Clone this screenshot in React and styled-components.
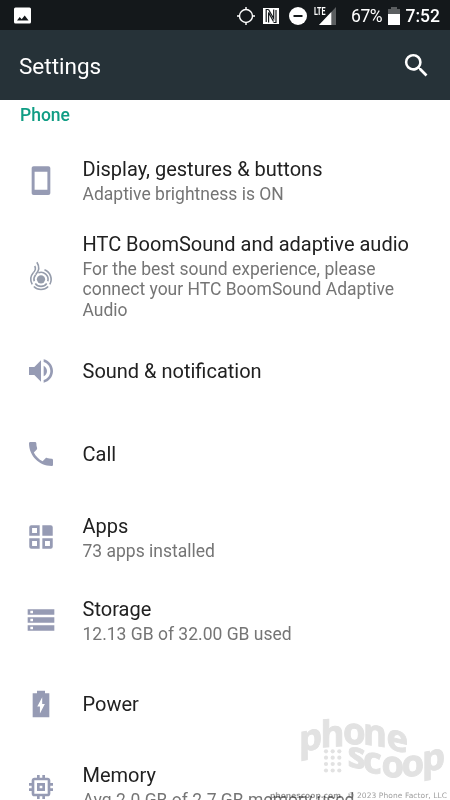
import React from "react";
import styled, { createGlobalStyle } from "styled-components";

const GlobalStyle = createGlobalStyle`
  * {
    box-sizing: border-box;
  }

  body {
    margin: 0;
    background-color: white;
    font-family: Roboto, "Liberation Sans", sans-serif;
  }
`;

const Screen = styled.div`
  position: relative;
  display: flex;
  flex-direction: column;
  width: 450px;
  height: 800px;
  overflow: hidden;
  background-color: white;
`;

const StatusBar = styled.div`
  display: flex;
  flex: none;
  align-items: center;
  justify-content: space-between;
  height: 30px;
  padding: 2px 10px 0 13px;
  background-color: #14181b;
  color: white;
`;

const StatusGroup = styled.div`
  display: flex;
  align-items: center;
`;

const StatusIcon = styled.svg`
  display: block;
  margin-right: ${props => props.$gap || 0}px;
`;

const Percent = styled.span`
  width: 36.5px;
  font-size: 17.5px;
  letter-spacing: -0.45px;
`;

const Clock = styled.span`
  font-size: 17.5px;
  font-weight: 500;
`;

const Toolbar = styled.header`
  display: flex;
  flex: none;
  align-items: center;
  justify-content: space-between;
  height: 70px;
  padding: 0 18px 0 19px;
  background-color: #263238;
  color: white;
`;

const Title = styled.h1`
  margin: 1px 0 0;
  font-size: 22.5px;
  font-weight: 400;
`;

const SearchButton = styled.button`
  display: flex;
  padding: 0;
  border: 0;
  background: none;
  color: white;
`;

const Category = styled.h2`
  flex: none;
  height: 39.7px;
  margin: 0;
  padding: 5px 20px 0;
  color: #0f9d84;
  font-size: 17.5px;
  font-weight: 500;
  line-height: 21px;
`;

const Row = styled.div`
  display: flex;
  flex: none;
  align-items: center;
  min-height: 83.1px;
  padding: 9px 32px 9px 25px;
`;

const RowIcon = styled.svg`
  display: block;
  flex: none;
  width: 32px;
  height: 32px;
  margin-right: 25.5px;
  fill: #969bb4;
`;

const RowName = styled.div`
  color: #212121;
  font-size: 20px;
  line-height: 24px;
`;

const RowSummary = styled.div`
  padding-top: 3.1px;
  color: #757575;
  font-size: 17.5px;
  line-height: 20.6px;
`;

const Watermark = styled.svg`
  position: absolute;
  right: 0;
  bottom: 0;
  mix-blend-mode: multiply;
`;

const rows = [
  {
    name: "Display, gestures & buttons",
    summary: "Adaptive brightness is ON",
    icon: (
      <path
        fillRule="evenodd"
        d="M6.500 1h11c.9 0 1.500.7 1.500 1.500v18.500c0 .8-.6 1.500-1.500 1.500h-11C5.600 22.500 5 21.800 5 21V2.500C5 1.700 5.600 1 6.500 1zM7.200 5v13.500h9.600V5z"
      />
    )
  },
  {
    name: "HTC BoomSound and adaptive audio",
    summary:
      "For the best sound experience, please connect your HTC BoomSound Adaptive Audio",
    icon: (
      <g fill="none" stroke="#959cab" strokeWidth="1.200">
        <circle cx="12" cy="14.500" r="3.100" fill="#959cab" stroke="none" />
        <path d="M10 9.600A5.300 5.300 0 0 1 17.100 15.900M16.300 17.600A5.300 5.300 0 0 1 7.700 17.600M6.900 15.900A5.300 5.300 0 0 1 8 11" />
        <path d="M14.600 7.400A7.600 7.600 0 0 1 18.600 18.300M17.400 19.900A7.600 7.600 0 0 1 6.600 19.900M5.400 18.300A7.600 7.600 0 0 1 6.200 9.600" />
        <path d="M6.200 9.600C8 7.800 8.100 6 7.300 4.500M8 11C10.800 8 10.800 4.600 8.900 1.700" />
      </g>
    )
  },
  {
    name: "Sound & notification",
    icon: (
      <path d="M3 9v6h4l5 5V4L7 9H3zm13.500 3c0-1.770-1.020-3.290-2.500-4.030v8.050c1.480-.73 2.500-2.250 2.500-4.020zM14 3.230v2.060c2.890.86 5 3.540 5 6.710s-2.110 5.850-5 6.710v2.060c4.010-.91 7-4.490 7-8.770s-2.990-7.860-7-8.770z" />
    )
  },
  {
    name: "Call",
    icon: (
      <path d="M6.620 10.790c1.440 2.830 3.760 5.140 6.590 6.590l2.200-2.200c.27-.27.67-.36 1.020-.24 1.120.37 2.330.57 3.570.57.55 0 1 .45 1 1V20c0 .55-.45 1-1 1-9.390 0-17-7.610-17-17 0-.55.45-1 1-1h3.500c.55 0 1 .45 1 1 0 1.250.2 2.450.57 3.570.11.35.03.74-.25 1.020l-2.200 2.200z" />
    )
  },
  {
    name: "Apps",
    summary: "73 apps installed",
    icon: (
      <path
        fillRule="evenodd"
        d="M4.700 3.200H11V11H3.200V4.700a1.500 1.500 0 0 1 1.500-1.500zM5.300 5.300v3.700H9V5.300zM13 3.200h6.300a1.500 1.500 0 0 1 1.500 1.500V11H13zM3.200 13H11v7.800H4.700a1.500 1.500 0 0 1-1.500-1.500zM5.300 15v3.700H9V15zM13 13h7.800v6.300a1.500 1.500 0 0 1-1.500 1.500H13zm2 2v3.700h3.700V15z"
      />
    )
  },
  {
    name: "Storage",
    summary: "12.13 GB of 32.00 GB used",
    icon: (
      <path d="M2 20h20v-4H2v4zm2-3h2v2H4v-2zM2 4v4h20V4H2zm4 3H4V5h2v2zm-4 7h20v-4H2v4zm2-3h2v2H4v-2z" />
    )
  },
  {
    name: "Power",
    icon: (
      <path
        fillRule="evenodd"
        d="M5.750 4H9V2h6v2h3.250v18H5.750zM12.900 7L9.200 13.800h2v5.400l3.700-7.200h-2z"
      />
    )
  },
  {
    name: "Memory",
    summary: "Avg 2.0 GB of 2.7 GB memory used",
    icon: (
      <path d="M15 9H9v6h6V9zm-2 4h-2v-2h2v2zm8-2V9h-2V7c0-1.100-.9-2-2-2h-2V3h-2v2h-2V3H9v2H7c-1.100 0-2 .9-2 2v2H3v2h2v2H3v2h2v2c0 1.100.9 2 2 2h2v2h2v-2h2v2h2v-2h2c1.100 0 2-.9 2-2v-2h2v-2h-2v-2h2zm-4 6H7V7h10v10z" />
    )
  }
];

// each letter of the logo sits on its own slanted baseline
const logoLetters = [
  ["p", 299, 752.500, -11],
  ["h", 320.500, 747.500, -4],
  ["o", 343, 743.500, 3],
  ["n", 363, 744, 8],
  ["e", 386.500, 748.500, 13],
  ["s", 347.500, 766, 12],
  ["c", 363, 771.500, 9],
  ["o", 381.500, 776.500, 3],
  ["o", 401.500, 777, -5],
  ["p", 422, 772.500, -11]
];

const dotColumns = [326, 332.700, 339.300];
const dotRows = [751.300, 757.700, 764, 770.500];

function SettingsRow({ icon, name, summary }) {
  return (
    <Row>
      <RowIcon viewBox="0 0 24 24">{icon}</RowIcon>
      <div>
        <RowName>{name}</RowName>
        {summary && <RowSummary>{summary}</RowSummary>}
      </div>
    </Row>
  );
}

function StatusIcons() {
  return (
    <StatusGroup>
      <StatusIcon width="18" height="18" viewBox="0 0 18 18" $gap={8.5}>
        <g fill="none" stroke="white" strokeWidth="1.400">
          <circle cx="9" cy="9" r="6.500" />
          <path d="M9 0v3M9 15V18M0 9h3M15 9H18" />
        </g>
      </StatusIcon>
      <StatusIcon width="16" height="16" viewBox="0 0 16 16" $gap={10}>
        <path fill="white" d="M0 0h16v16H0z" />
        <path
          fill="none"
          stroke="#14181b"
          strokeWidth="1.200"
          d="M5.500 1.500H3.200V14M5.600 14.500V4.500L10.500 13.500M5.500 1.500L10.700 10.500V1.500M10.500 14.500h2.500V2"
        />
      </StatusIcon>
      <StatusIcon width="18" height="18" viewBox="0 0 18 18" $gap={7}>
        <circle cx="9" cy="9" r="9" fill="white" />
        <path fill="#14181b" d="M4.500 8h9v2h-9z" />
      </StatusIcon>
      <StatusIcon width="23" height="18" viewBox="0 0 23 18" $gap={14}>
        <path fill="#5b5e60" d="M22 0v18H5z" />
        <path fill="white" d="M17.300 5v13H5z" />
        <path fill="#14181b" d="M0 0h12.500v9.500H0z" />
        <text
          x="0"
          y="8.300"
          fill="white"
          fontSize="11"
          fontWeight="700"
          textLength="11.500"
          lengthAdjust="spacingAndGlyphs"
        >
          LTE
        </text>
      </StatusIcon>
      <Percent>67%</Percent>
      <StatusIcon width="12" height="18" viewBox="0 0 12 18" $gap={6}>
        <path fill="#5b5e60" d="M3 0h6v2H12v5H0V2h3z" />
        <path fill="white" d="M0 7h12v11H0z" />
      </StatusIcon>
      <Clock>7:52</Clock>
    </StatusGroup>
  );
}

function PhoneScoopMark() {
  return (
    <Watermark width="190" height="90" viewBox="260 710 190 90">
      <g
        fill="#e2e2e2"
        fontFamily="'Open Sans', sans-serif"
        fontSize="36.500"
        fontWeight="700"
      >
        {logoLetters.map(([letter, x, y, angle]) => (
          <text
            key={x}
            transform={`translate(${x} ${y}) skewY(${angle})`}
            stroke="#e2e2e2"
            strokeWidth="0.900"
          >
            {letter}
          </text>
        ))}
        {dotRows.map(y =>
          dotColumns.map(x => <circle key={`${x}-${y}`} cx={x} cy={y} r="2.100" />)
        )}
      </g>
      <g fontFamily="'DejaVu Sans', sans-serif" fontSize="7.500">
        <text x="270" y="797.500" fill="#999" fontWeight="700" textLength="71">
          phonescoop.com
        </text>
        <text x="347" y="797.500" fill="#a0a0a0" textLength="100">
          © 2023 Phone Factor, LLC
        </text>
      </g>
    </Watermark>
  );
}

function App() {
  return (
    <>
      <GlobalStyle />
      <Screen>
        <StatusBar>
          <StatusIcon width="18" height="18" viewBox="0 0 18 18">
            <rect x="1" y="0.500" width="17" height="16" rx="1.500" fill="white" />
            <path fill="#14181b" d="M4 13.500l2.700-3.500 2 2.200 3-3.800 3.900 5.100z" />
          </StatusIcon>
          <StatusIcons />
        </StatusBar>
        <Toolbar>
          <Title>Settings</Title>
          <SearchButton aria-label="Search">
            <svg width="31" height="31" viewBox="0 0 24 24" fill="currentColor">
              <path d="M15.500 14h-.79l-.28-.27A6.471 6.471 0 0 0 16 9.500 6.500 6.500 0 1 0 9.500 16c1.610 0 3.090-.59 4.230-1.570l.27.28v.79l5 4.990L20.490 19l-4.990-5zm-6 0C7.010 14 5 11.990 5 9.500S7.010 5 9.500 5 14 7.010 14 9.500 11.990 14 9.500 14z" />
            </svg>
          </SearchButton>
        </Toolbar>
        <Category>Phone</Category>
        {rows.map(row => (
          <SettingsRow key={row.name} {...row} />
        ))}
        <PhoneScoopMark />
      </Screen>
    </>
  );
}

export default App;
